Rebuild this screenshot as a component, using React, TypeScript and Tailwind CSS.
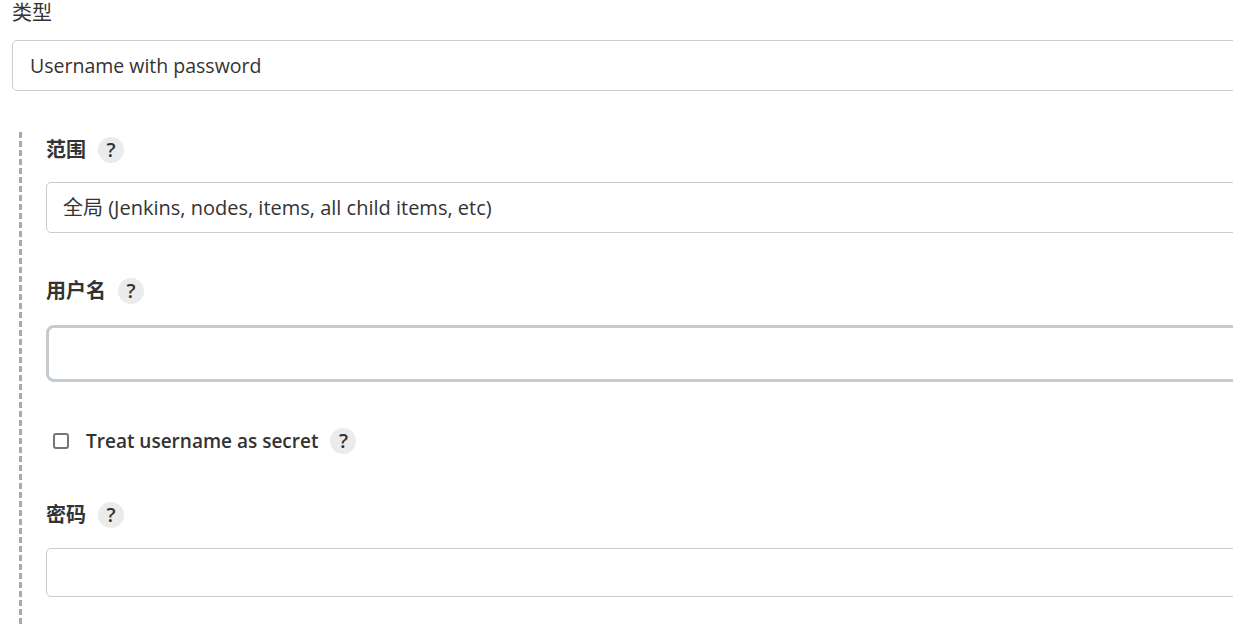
import React from 'react';

const font = 'font-["Open_Sans","Noto_Sans_CJK_SC",sans-serif]';

function Help() {
  return (
    <span className="ml-[12px] inline-flex h-[26px] w-[26px] items-center justify-center rounded-full bg-[#ebebeb] pb-[1px] text-[20px] font-semibold leading-none text-[#333]">
      ?
    </span>
  );
}

function Label({ text }: { text: string }) {
  return (
    <div className="flex h-[26px] items-center">
      <span className="text-[20px] font-bold leading-[26px] text-[#333]">{text}</span>
      <Help />
    </div>
  );
}

export default function App() {
  return (
    <div className={`${font} h-[626px] w-[1233px] overflow-hidden bg-white text-[#333]`}>
      {/* 类型 */}
      <div className="pl-[12px] pt-0">
        <div className="text-[20px] leading-[26px]">类型</div>
        <div className="-mr-4 mt-[14px] flex h-[51px] items-center rounded-[5px] border border-[#c6cdd3] pl-[17px] text-[19.5px]">
          Username with password
        </div>
      </div>

      {/* nested section */}
      <div className="mt-[41px] flex">
        <div className="ml-[19px] w-[3px] shrink-0 bg-[repeating-linear-gradient(to_bottom,#a9a9a9_0_6px,transparent_6px_9px)]" />
        <div className="ml-[24px] flex-1 pt-[5px]">
          <Label text="范围" />
          <div className="-mr-4 mt-[19px] flex h-[51px] items-center rounded-[5px] border border-[#c6cdd3] pl-[16px] text-[20px]">
            全局 (Jenkins, nodes, items, all child items, etc)
          </div>

          <div className="mt-[45px]">
            <Label text="用户名" />
          </div>
          <div className="-mr-4 mt-[21px] h-[57px] rounded-[8px] border-[3px] border-[#c3cbd0] bg-white" />

          <div className="mt-[46px] flex h-[26px] items-center">
            <span className="ml-[7px] h-[16px] w-[16px] rounded-[3px] border-2 border-[#767676] bg-white" />
            <span className="ml-[17px] text-[19px] font-semibold leading-[26px] text-[#333]">
              Treat username as secret
            </span>
            <Help />
          </div>

          <div className="mt-[48px]">
            <Label text="密码" />
          </div>
          <div className="-mr-4 mt-[20px] h-[49px] rounded-[5px] border border-[#c6cdd3] bg-white" />
          <div className="h-[40px]" />
        </div>
      </div>
    </div>
  );
}
